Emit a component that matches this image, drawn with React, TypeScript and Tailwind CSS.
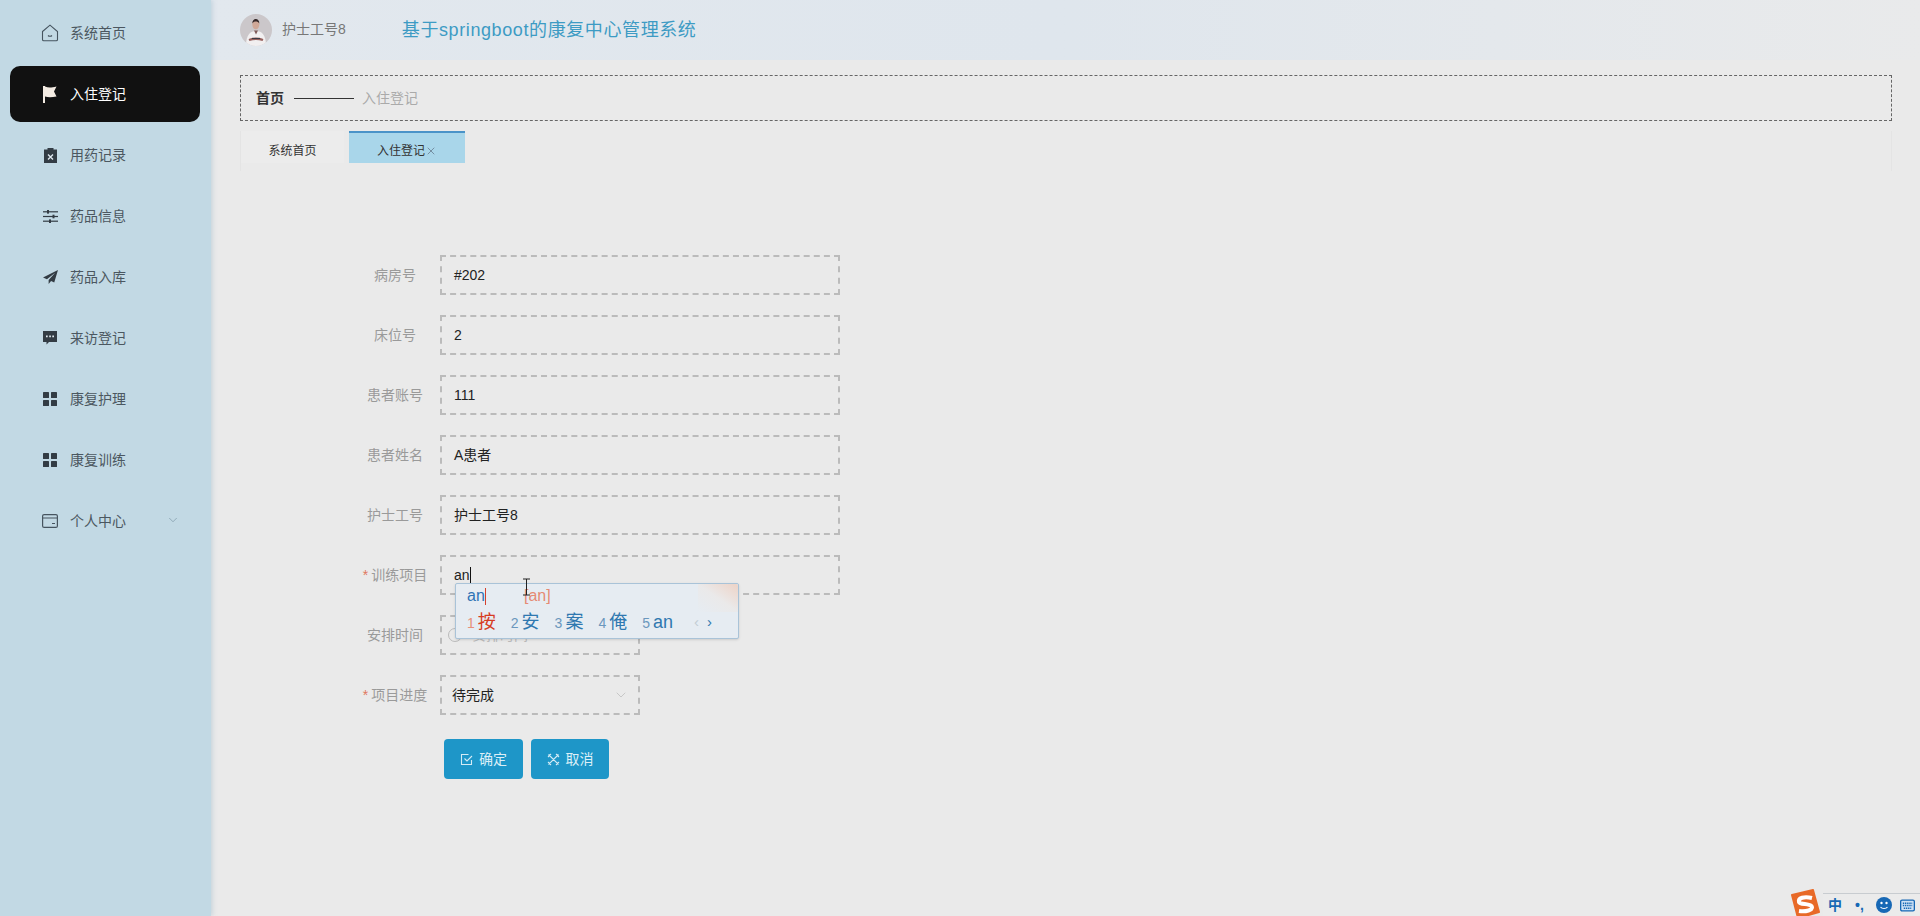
import { ChevronDown, X } from "lucide-react"
import type { ReactNode } from "react"

const font = { fontFamily: '"Liberation Sans", "Noto Sans CJK SC", sans-serif' }

function HomeIcon() {
  return (
    <svg width="18" height="18" viewBox="0 0 18 18" fill="none" stroke="#46545f" strokeWidth="1.1">
      <path d="M1.500 7.500 9 1.200l7.500 6.300v8a1.300 1.300 0 0 1-1.300 1.300H2.800a1.300 1.300 0 0 1-1.300-1.300z" />
      <path d="M7 11.500c1 1 3 1 4 0" />
    </svg>
  )
}
function FlagIcon() {
  return (
    <svg width="14" height="17" viewBox="0 0 14 17" fill="#f3ebe2">
      <rect x="0" y="0" width="2" height="17" />
      <path d="M2 .5c3 1.300 6 1.300 11.500 0L11 5.500l2.500 5c-5 1-8.500 1-11.500 0z" />
    </svg>
  )
}
function ClipIcon() {
  return (
    <svg width="13" height="15" viewBox="0 0 13 15">
      <path fill="#333c44" d="M0 1.500h3.500V0h6v1.500H13V15H0z" />
      <path stroke="#dfe8ee" strokeWidth="1.400" d="m4 6.500 5 5m0-5-5 5" />
    </svg>
  )
}
function SlidersIcon() {
  return (
    <svg width="15" height="13" viewBox="0 0 15 13" fill="#333c44">
      <rect x="0" y="1.200" width="15" height="1.200" />
      <rect x="0" y="5.900" width="15" height="1.200" />
      <rect x="0" y="10.600" width="15" height="1.200" />
      <rect x="4" y="0" width="2" height="3.600" />
      <rect x="9.500" y="4.700" width="2" height="3.600" />
      <rect x="6" y="9.400" width="2" height="3.600" />
    </svg>
  )
}
function PlaneIcon() {
  return (
    <svg width="15" height="14" viewBox="0 0 16 15" fill="#333c44">
      <path d="M16 0 0 8l4.200 1.800L13 3 6 10.600V15l2.600-3.200 3.400 1.500z" />
    </svg>
  )
}
function ChatIcon() {
  return (
    <svg width="14" height="14" viewBox="0 0 14 14">
      <path fill="#333c44" d="M0 0h14v11H6l-2.500 2.600V11H0z" />
      <path fill="#dfe8ee" d="M3 4.500h1.700v1.700H3zm3.200 0h1.700v1.700H6.200zm3.100 0H11v1.700H9.300z" />
    </svg>
  )
}
function GridIcon() {
  return (
    <svg width="14" height="14" viewBox="0 0 14 14" fill="#333c44">
      <rect width="6" height="6" rx=".6" />
      <rect x="8" width="6" height="6" rx=".6" />
      <rect y="8" width="6" height="6" rx=".6" />
      <rect x="8" y="8" width="6" height="6" rx=".6" />
    </svg>
  )
}
function WalletIcon() {
  return (
    <svg width="16" height="14" viewBox="0 0 16 14" fill="none" stroke="#46545f" strokeWidth="1.200">
      <rect x=".6" y=".6" width="14.800" height="12.800" rx="1.500" />
      <path d="M.6 4h14.800M10 9.500h3" />
    </svg>
  )
}

function CheckSquareIcon() {
  return (
    <svg width="13" height="13" viewBox="0 0 13 13" fill="none" stroke="#d3ebf5" strokeWidth="1.100">
      <path d="M11.500 7v4.500h-10v-10h7" />
      <path d="m4.500 5.500 2.500 2.500 5-5" />
    </svg>
  )
}
function CrossIcon() {
  return (
    <svg width="13" height="13" viewBox="0 0 13 13" fill="none" stroke="#d3ebf5" strokeWidth="1.100">
      <path d="m1.500 1.500 10 10m0-10-10 10M1 4l3-3M9 12l3-3M9 1l3 3M1 9l3 3" />
    </svg>
  )
}

function Avatar() {
  return (
    <svg width="32" height="32" viewBox="0 0 32 32" className="rounded-full">
      <rect width="32" height="32" fill="#cbc7ca" />
      <path fill="#f1eff0" d="M6 32c0-11 4-15 10-15s10 4 10 15z" />
      <path fill="#7f5a58" d="m14 16.500 2 4 2-4z" />
      <ellipse cx="15.800" cy="10.500" rx="3.500" ry="4.800" fill="#cfa898" />
      <path fill="#35292a" d="M12.300 9.500c0-3 1.500-4.500 3.500-4.500s3.500 1.500 3.500 4.500c-1-1.500-2-2-3.500-2s-2.500.5-3.500 2z" />
      <path stroke="#96605c" strokeWidth="2.400" d="M9 26c4-1.500 10-1.500 14 0" />
      <path stroke="#3a3a44" strokeWidth="1" d="M12 24.500h8" />
    </svg>
  )
}

const menu: { label: string; icon: ReactNode; active?: boolean; arrow?: boolean }[] = [
  { label: "系统首页", icon: <HomeIcon /> },
  { label: "入住登记", icon: <FlagIcon />, active: true },
  { label: "用药记录", icon: <ClipIcon /> },
  { label: "药品信息", icon: <SlidersIcon /> },
  { label: "药品入库", icon: <PlaneIcon /> },
  { label: "来访登记", icon: <ChatIcon /> },
  { label: "康复护理", icon: <GridIcon /> },
  { label: "康复训练", icon: <GridIcon /> },
  { label: "个人中心", icon: <WalletIcon />, arrow: true },
]

function Sidebar() {
  return (
    <aside className="z-10 w-[211px] shrink-0 bg-[#c2d9e4] pt-[5px] shadow-[2px_0_4px_rgba(150,180,200,0.35)]">
      {menu.map((m) => (
        <div
          key={m.label}
          className={
            m.active
              ? "mb-[5px] ml-[10px] mr-[11px] flex h-[56px] items-center rounded-[10px] bg-[#111111] text-white"
              : "mb-[5px] ml-[10px] mr-[11px] flex h-[56px] items-center text-[#4b5760]"
          }
        >
          <span className="flex w-[60px] justify-center pl-[20px]">{m.icon}</span>
          <span className={m.arrow ? "mt-[1px] text-[14px]" : "text-[14px]"}>{m.label}</span>
          {m.arrow && <ChevronDown size={14} strokeWidth={1} className="-mt-[3px] ml-[40px] text-[#6f8a99]" />}
        </div>
      ))}
    </aside>
  )
}

const fields = [
  { label: "病房号", value: "#202" },
  { label: "床位号", value: "2" },
  { label: "患者账号", value: "111" },
  { label: "患者姓名", value: "A患者" },
  { label: "护士工号", value: "护士工号8" },
]

function Label({ text, req }: { text: string; req?: boolean }) {
  return (
    <label className="mr-[5px] w-[80px] text-center text-[14px] text-[#9a9a9a]">
      {req && <span className="mr-[3px] text-[#e0785f]">*</span>}
      {text}
    </label>
  )
}

function ImePopup() {
  const cands: [string, string][] = [["2", "安"], ["3", "案"], ["4", "俺"], ["5", "an"]]
  return (
    <div className="absolute left-[13px] top-[26px] z-20 h-[56px] w-[284px] rounded-[2px] border border-[#a9c3d8] bg-[#e6ecf2] pl-[11px] shadow-sm">
      <div className="flex h-[24px] items-center text-[16px] text-[#2f73b5]">
        <span className="w-[57px]">
          an<span className="inline-block h-[17px] w-px bg-[#d6402c] align-middle" />
        </span>
        <span className="text-[#e58a74]">[an]</span>
      </div>
      <div className="flex h-[28px] items-center text-[18px] text-[#2f78b0]">
        <span className="mr-[15px] text-[#d63c22]"><span className="mr-[3px] text-[14px] text-[#e8907a]">1</span>按</span>
        {cands.map(([n, c]) => (
          <span key={n} className="mr-[15px]"><span className="mr-[3px] text-[14px] text-[#6b97bd]">{n}</span>{c}</span>
        ))}
        <span className="ml-[6px] mr-[8px] text-[15px] text-[#c3ccd4]">‹</span>
        <span className="text-[15px]">›</span>
      </div>
      <div className="absolute right-0 top-0 h-[28px] w-[40px] rounded-tr-[2px] bg-gradient-to-bl from-[#f0c8b4] via-[#ece8e6] to-transparent opacity-70" />
    </div>
  )
}

function ImeBar() {
  return (
    <div className="fixed bottom-0 right-0 flex h-[23px] w-[97px] items-center border-t border-[#c8ccd0] bg-[#ebebeb] pl-[5px] font-bold text-[#1768b5]">
      <svg width="30" height="30" viewBox="0 0 30 30" className="absolute -left-[33px] -top-[5px]">
        <path fill="#e86a28" stroke="#e86a28" strokeWidth="2" strokeLinejoin="round" d="M2 6 23 1l6 22-21 6z" />
        <path fill="none" stroke="#fff" strokeWidth="4" d="M22 9C14 7 8 9 9 13c1 3 12 1 13 5 1 3-6 5-13 4" />
      </svg>
      <span className="mr-[13px] text-[14px]">中</span>
      <span className="mr-[12px] text-[14px]">•,</span>
      <svg width="16" height="16" viewBox="0 0 16 16" className="mr-[8px]">
        <circle cx="8" cy="8" r="8" fill="#1768b5" />
        <circle cx="5.500" cy="6" r="1.200" fill="#fff" />
        <circle cx="10.500" cy="6" r="1.200" fill="#fff" />
        <path d="M4.500 10c1.500 2 5.500 2 7 0" stroke="#fff" strokeWidth="1.200" fill="none" />
      </svg>
      <svg width="15" height="13" viewBox="0 0 16 13">
        <rect x=".7" y=".7" width="14.600" height="11.600" rx="1.500" fill="#cfe2f5" stroke="#1768b5" strokeWidth="1.400" />
        <path d="M3 4h10M3 6.500h10M4 9.500h8" stroke="#1768b5" strokeWidth="1.600" strokeDasharray="1.500 .8" />
      </svg>
    </div>
  )
}

export default function App() {
  return (
    <div className="flex h-[916px] w-[1920px] overflow-hidden bg-[#eaeaea]" style={font}>
      <Sidebar />
      <main className="relative min-w-0 flex-1">
        <header className="flex h-[60px] items-center bg-gradient-to-r from-[#e2e8ee] via-[#dfe6ed] to-[#e9eaeb] pl-[29px]">
          <Avatar />
          <span className="-mt-[2px] ml-[10px] text-[14px] text-[#777777]">护士工号8</span>
          <span className="ml-[56px] text-[18px] tracking-[0.6px] text-[#3d9bc4]">基于springboot的康复中心管理系统</span>
        </header>

        <div className="ml-[29px] mr-[28px] mt-[15px] flex h-[46px] items-center border border-dashed border-[#666666] pl-[15px] text-[14px]">
          <span className="font-bold text-[#333333]">首页</span>
          <span className="ml-[10px] mr-[8px] h-px w-[60px] bg-[#333333]" />
          <span className="text-[#aaaaaa]">入住登记</span>
        </div>

        <div className="ml-[29px] mr-[28px] mt-[10px] flex h-[40px] items-start gap-[5px] border-x border-[#e4e4e4]">
          <div className="flex h-[32px] w-[103px] items-center justify-center bg-[#ececec] pt-[7px] text-[12px] text-[#333333]">系统首页</div>
          <div className="flex h-[32px] w-[116px] items-center justify-center border-t-2 border-[#4a93c8] bg-[#a9d6ea] pt-[5px] text-[12px] text-[#333333]">
            入住登记
            <X size={12} strokeWidth={1.200} className="text-[#506070]" />
          </div>
        </div>

        <form className="mt-[84px] flex flex-col gap-[20px] pl-[144px]">
          {fields.map((f) => (
            <div key={f.label} className="flex h-[40px] items-center">
              <Label text={f.label} />
              <div className="flex h-[40px] w-[400px] items-center border-2 border-dashed border-[#bbbbbb] pl-[12px] text-[14px] text-[#222222]">
                {f.value}
              </div>
            </div>
          ))}
          <div className="flex h-[40px] items-center">
            <Label text="训练项目" req />
            <div className="relative flex h-[40px] w-[400px] items-center border-2 border-dashed border-[#bbbbbb] pl-[12px] text-[14px] text-[#222222]">
              an<span className="h-[16px] w-px bg-[#111111]" />
              <ImePopup />
              <svg width="9" height="18" viewBox="0 0 9 18" className="absolute left-[80px] top-[21px] z-30" fill="none" stroke="#222222" strokeWidth="1">
                <path d="M1 1h7M4.500 1v16M1 17h7" />
              </svg>
            </div>
          </div>
          <div className="flex h-[40px] items-center">
            <Label text="安排时间" />
            <div className="flex h-[40px] w-[200px] items-center gap-[10px] border-2 border-dashed border-[#bbbbbb] pl-[6px] text-[14px] text-[#bbbbbb]">
              <span className="h-[14px] w-[14px] rounded-full border border-[#bbbbbb]" />
              安排时间
            </div>
          </div>
          <div className="flex h-[40px] items-center">
            <Label text="项目进度" req />
            <div className="flex h-[40px] w-[200px] items-center justify-between border-2 border-dashed border-[#bbbbbb] pl-[10px] pr-[9px] text-[14px] text-[#222222]">
              待完成
              <ChevronDown size={16} strokeWidth={1.100} className="text-[#bbbbbb]" />
            </div>
          </div>
          <div className="mt-[4px] flex gap-[8px] pl-[89px]">
            <button type="button" className="flex h-[40px] w-[79px] items-center justify-center gap-[6px] rounded-[4px] bg-[#1e96c8] text-[14px] text-[#dceff7]">
              <CheckSquareIcon /> 确定
            </button>
            <button type="button" className="flex h-[40px] w-[78px] items-center justify-center gap-[6px] rounded-[4px] bg-[#1e96c8] text-[14px] text-[#dceff7]">
              <CrossIcon /> 取消
            </button>
          </div>
        </form>
      </main>
      <ImeBar />
    </div>
  )
}
